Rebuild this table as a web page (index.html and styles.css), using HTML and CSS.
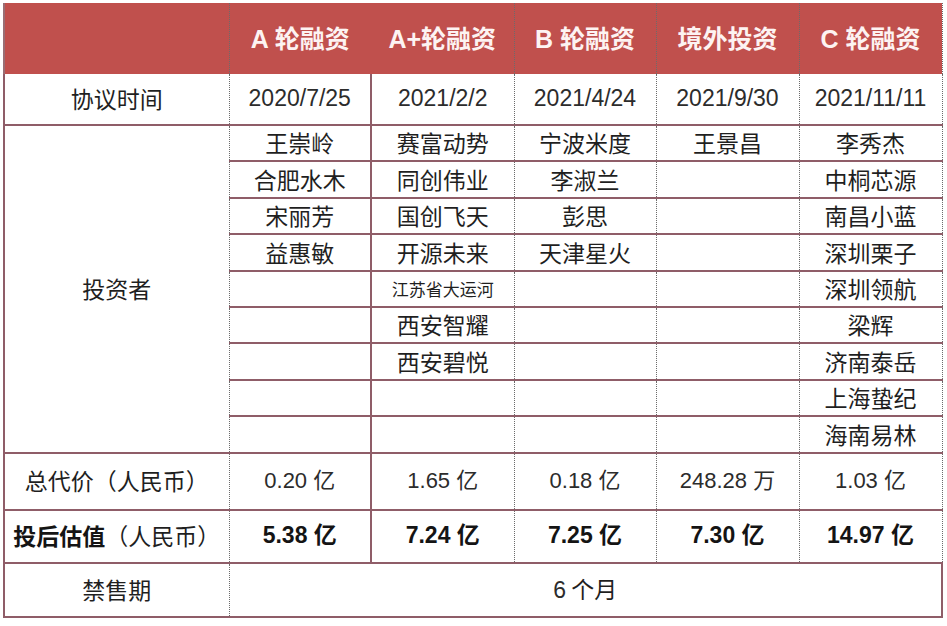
FILE: index.html
```html
<!DOCTYPE html>
<html lang="zh-CN">
<head>
<meta charset="utf-8">
<title>融资表</title>
<link rel="stylesheet" href="styles.css">
</head>
<body>
<table class="grid">
  <colgroup>
    <col class="w0"><col class="w1"><col class="w2"><col class="w3"><col class="w4"><col class="w5">
  </colgroup>
  <tr class="head">
    <th class="c0"></th>
    <th class="c1 h1">A 轮融资</th>
    <th class="c2">A+轮融资</th>
    <th class="c3">B 轮融资</th>
    <th class="c4">境外投资</th>
    <th class="c5">C 轮融资</th>
  </tr>
  <tr class="date">
    <td class="c0">协议时间</td>
    <td class="c1 num dt">2020/7/25</td>
    <td class="c2 num dt">2021/2/2</td>
    <td class="c3 num dt">2021/4/24</td>
    <td class="c4 num dt">2021/9/30</td>
    <td class="c5 num dt">2021/11/11</td>
  </tr>
  <tr class="inv">
    <td class="c0 side" rowspan="9">投资者</td>
    <td class="c1">王崇岭</td>
    <td class="c2">赛富动势</td>
    <td class="c3">宁波米度</td>
    <td class="c4">王景昌</td>
    <td class="c5">李秀杰</td>
  </tr>
  <tr class="inv">
    <td class="c1">合肥水木</td>
    <td class="c2">同创伟业</td>
    <td class="c3">李淑兰</td>
    <td class="c4"></td>
    <td class="c5">中桐芯源</td>
  </tr>
  <tr class="inv">
    <td class="c1">宋丽芳</td>
    <td class="c2">国创飞天</td>
    <td class="c3">彭思</td>
    <td class="c4"></td>
    <td class="c5">南昌小蓝</td>
  </tr>
  <tr class="inv">
    <td class="c1">益惠敏</td>
    <td class="c2">开源未来</td>
    <td class="c3">天津星火</td>
    <td class="c4"></td>
    <td class="c5">深圳栗子</td>
  </tr>
  <tr class="inv">
    <td class="c1"></td>
    <td class="c2 small">江苏省大运河</td>
    <td class="c3"></td>
    <td class="c4"></td>
    <td class="c5">深圳领航</td>
  </tr>
  <tr class="inv">
    <td class="c1"></td>
    <td class="c2">西安智耀</td>
    <td class="c3"></td>
    <td class="c4"></td>
    <td class="c5">梁辉</td>
  </tr>
  <tr class="inv">
    <td class="c1"></td>
    <td class="c2">西安碧悦</td>
    <td class="c3"></td>
    <td class="c4"></td>
    <td class="c5">济南泰岳</td>
  </tr>
  <tr class="inv">
    <td class="c1"></td>
    <td class="c2"></td>
    <td class="c3"></td>
    <td class="c4"></td>
    <td class="c5">上海蛰纪</td>
  </tr>
  <tr class="inv">
    <td class="c1"></td>
    <td class="c2"></td>
    <td class="c3"></td>
    <td class="c4"></td>
    <td class="c5">海南易林</td>
  </tr>
  <tr class="total">
    <td class="c0">总代价（人民币）</td>
    <td class="c1 num">0.20 亿</td>
    <td class="c2 num">1.65 亿</td>
    <td class="c3 num">0.18 亿</td>
    <td class="c4 num">248.28 万</td>
    <td class="c5 num">1.03 亿</td>
  </tr>
  <tr class="value">
    <td class="c0"><b class="strong">投后估值</b>（人民币）</td>
    <td class="c1 num bold">5.38 亿</td>
    <td class="c2 num bold">7.24 亿</td>
    <td class="c3 num bold">7.25 亿</td>
    <td class="c4 num bold">7.30 亿</td>
    <td class="c5 num bold">14.97 亿</td>
  </tr>
  <tr class="lock">
    <td class="c0">禁售期</td>
    <td class="span" colspan="5"><span class="num">6</span> 个月</td>
  </tr>
</table>
</body>
</html>
```

FILE: styles.css
```css
html, body {
  margin: 0;
  padding: 0;
  background: #ffffff;
}

body {
  font-family: "Noto Sans CJK SC", "Noto Sans", sans-serif;
  color: #1f1f1f;
}

.grid {
  border-collapse: collapse;
  table-layout: fixed;
  width: 938px;
  margin: 3px 0 0 3px;
}

.w0 { width: 225px; }
.w1 { width: 142px; }
.w2 { width: 143px; }
.w3 { width: 142px; }
.w4 { width: 143px; }
.w5 { width: 143px; }

.grid td,
.grid th {
  padding: 0;
  text-align: center;
  vertical-align: middle;
  font-size: 23px;
  font-weight: 400;
  line-height: 1.2;
  white-space: nowrap;
  border-top: 2px solid #8f5d68;
  border-bottom: 2px solid #8f5d68;
  border-left: none;
  border-right: none;
}

.grid .c0 {
  border-left: 2px solid #8f5d68;
  border-right: 1px dotted #6b6b6b;
}
.grid .c1 { border-right: 2px solid #8f5d68; }
.grid .c2,
.grid .c3,
.grid .c4,
.grid .c5 { border-right: 1px dotted #6b6b6b; }

.head th {
  height: 71px;
  background: #c0504d;
  color: #fdf3f2;
  font-family: "Liberation Sans", "Noto Sans CJK SC", sans-serif;
  font-weight: 700;
  font-size: 25px;
  border-top: none;
  border-bottom: none;
}
.grid .head .h1 { border-right: none; }
.grid .head .c0 { border-left: 2px solid #9a6e74; }

.date td {
  height: 50px;
  border-top: none;
}

.inv td { height: 34.4px; }

.side { vertical-align: middle; }

.small { font-size: 17px !important; }

.total td { height: 55px; }
.value td { height: 51px; }
.lock td { height: 52px; }

.grid .span {
  border-right: 2px solid #8f5d68;
}

.num {
  font-family: "Liberation Sans", "Noto Sans CJK SC", sans-serif;
  color: #2c2c2c;
}
.grid td.num { font-size: 22px; }
.grid td.dt { font-size: 23px; }

.bold {
  font-weight: 700 !important;
  color: #141414;
}
.grid td.bold { font-size: 23px; }

.strong {
  font-weight: 700;
  color: #141414;
}
```
